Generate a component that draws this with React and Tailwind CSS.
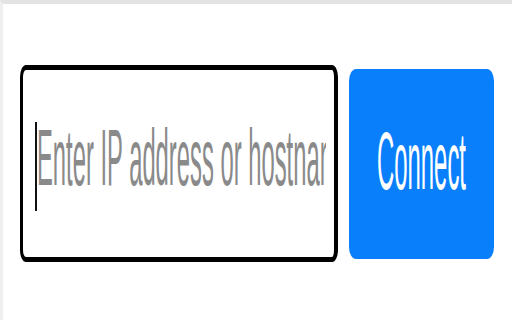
export default function App() {
    return (
        <div className="w-[512px] h-[320px] bg-white overflow-hidden border-t-[4px] border-t-[#e3e3e3] border-l-[3px] border-l-[#efefef] font-['Liberation_Sans',Arial,sans-serif]">
            <div className="flex items-center pl-[17px] pt-[61px]">
                {/* address field */}
                <div className="w-[318px] h-[197px] flex items-center bg-white border-black border-t-[5px] border-b-[5px] border-l-[3px] border-r-[4px] rounded-[6px/12px] pl-[12px] pr-[8px]">
                    <span className="shrink-0 w-[2px] h-[89px] bg-[#111] mt-[6px]" />
                    <div className="flex-1 h-full flex items-center overflow-hidden">
                        <span className="shrink-0 whitespace-nowrap text-[23.8px] leading-[26px] text-[#8a8a8a] scale-y-[3.35] mb-[11px]">
                            Enter IP address or hostname
                        </span>
                    </div>
                </div>

                {/* connect */}
                <button className="ml-[11px] w-[145px] h-[190px] flex items-center justify-center bg-[#0a7ffb] rounded-[7px/12px]">
                    <span className="text-[23.9px] leading-[26px] text-white scale-y-[3.4] mb-[4px]">
                        Connect
                    </span>
                </button>
            </div>
        </div>
    );
}
